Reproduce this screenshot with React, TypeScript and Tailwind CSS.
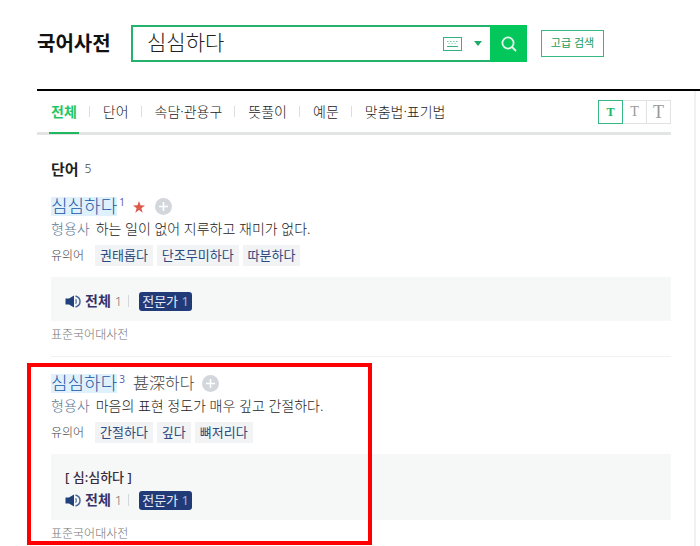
import React, { useState } from "react";

const TABS = ["전체", "단어", "속담·관용구", "뜻풀이", "예문", "맞춤법·표기법"];

interface Entry {
  word: string;
  order: string;
  hanja?: string;
  starred?: boolean;
  part: string;
  meaning: string;
  synonyms: string[];
  pronunciation?: string;
  marked?: boolean;
}

const ENTRIES: Entry[] = [
  {
    word: "심심하다",
    order: "1",
    starred: true,
    part: "형용사",
    meaning: "하는 일이 없어 지루하고 재미가 없다.",
    synonyms: ["권태롭다", "단조무미하다", "따분하다"],
  },
  {
    word: "심심하다",
    order: "3",
    hanja: "甚深하다",
    part: "형용사",
    meaning: "마음의 표현 정도가 매우 깊고 간절하다.",
    synonyms: ["간절하다", "깊다", "뼈저리다"],
    pronunciation: "[ 심:심하다 ]",
    marked: true,
  },
];

function KeyboardIcon() {
  return (
    <svg width="19" height="14" viewBox="0 0 19 14" fill="none" stroke="#35b37c" aria-hidden="true">
      <rect x="0.5" y="0.5" width="18" height="13" />
      <path d="M4 4.5h1.5M7 4.5h1.5M10 4.5h1.5M13 4.5h1.5M5.5 6.5h1M8.5 6.5h1M11.5 6.5h1" strokeOpacity="0.7" />
      <path d="M4 9.5h11" />
    </svg>
  );
}

function SpeakerIcon() {
  return (
    <svg width="16" height="13" viewBox="0 0 16 13" aria-hidden="true">
      <path d="M0.5 3.5H4L9 0.5v12L4 9.5H0.5z" fill="#20407c" />
      <path d="M10.5 4.3q1.8 2.2 0 4.4" fill="none" stroke="#7388ae" strokeWidth="1.4" />
      <path d="M10.5 1q4.500 1.200 4.500 5.500t-4.500 5.500" fill="none" stroke="#4a659a" strokeWidth="1.5" />
    </svg>
  );
}

function StarIcon() {
  return (
    <svg width="12" height="12" viewBox="0 0 12 12" className="mt-0.5" role="img" aria-label="중요 단어">
      <path d="M6 0l1.500 4.300 4.500.1-3.600 2.800 1.300 4.500L6 9.100l-3.700 2.600 1.300-4.500L0 4.400l4.500-.1z" fill="#dc5a4b" />
    </svg>
  );
}

function PlusIcon() {
  return (
    <svg width="17" height="17" viewBox="0 0 17 17" aria-hidden="true">
      <circle cx="8.500" cy="8.500" r="8.500" fill="#d3d7dc" />
      <path d="M8.500 4v9M4 8.500h9" stroke="#fff" strokeWidth="1.600" />
    </svg>
  );
}

function EntryItem({ entry }: { entry: Entry }) {
  return (
    <article className="relative">
      <div className="flex h-6 items-center">
        <h3 className="flex items-center text-lg font-light">
          <a href="#entry" className="flex items-center text-[#2056a4]">
            <span className="bg-[#dff1fd] leading-[19px]">{entry.word}</span>
            <sup className="top-0 ml-0.5 self-start text-[10px] leading-[10px] font-normal text-[#5a5fb8]">{entry.order}</sup>
          </a>
        </h3>
        {entry.hanja && <span className="ml-2 text-base font-light leading-6 text-[#444]">{entry.hanja}</span>}
        <div className="ml-2 flex items-center gap-2.5">
          {entry.starred && <StarIcon />}
          <button type="button" aria-label="단어장에 추가" className="flex">
            <PlusIcon />
          </button>
        </div>
      </div>
      <p className="flex gap-[6px] text-sm leading-[22px] font-light text-[#222]">
        <span className="text-[#5a7893]">{entry.part}</span>
        <span>{entry.meaning}</span>
      </p>
      <div className="mt-[5px] flex items-center text-[13px] leading-[21px]">
        <span className="w-11 text-xs font-light text-[#444]">유의어</span>
        <ul className="flex gap-1">
          {entry.synonyms.map((s) => (
            <li key={s}>
              <a href="#synonym" className="block bg-[#f1f3f4] px-[5px] text-[#2c4a80]">
                {s}
              </a>
            </li>
          ))}
        </ul>
      </div>
      <div className="mt-[11px] bg-[#f6f8f7] px-3.5 pt-[14px] pb-[10px]">
        {entry.pronunciation && (
          <p className="mb-1 text-[13px] leading-[18px] font-medium text-[#3a2a3c]">{entry.pronunciation}</p>
        )}
        <div className="flex h-5 items-center">
          <button type="button" className="flex items-center gap-1 text-sm leading-5 font-bold text-[#35336b]">
            <SpeakerIcon />
            전체 <span className="text-[13px] font-light text-[#777]">1</span>
          </button>
          <span className="mr-2.5 ml-1.5 h-3 w-px bg-[#d5d8da]" />
          <button type="button" className="rounded-[3px] bg-[#213b78] px-[3px] text-[13px] leading-[19px] text-[#e4e9f4]">
            전문가 <span className="text-[#a9b6d2]">1</span>
          </button>
        </div>
      </div>
      <p className="mt-1 text-xs leading-5 font-light text-[#777]">표준국어대사전</p>
      {entry.marked && (
        <div className="pointer-events-none absolute -top-2 -bottom-px -left-6 w-[345px] border-4 border-[#fe0000]" />
      )}
    </article>
  );
}

export default function App() {
  const [query, setQuery] = useState("심심하다");
  const [tab, setTab] = useState(0);
  return (
    <div className="bg-white font-['Noto_Sans','Noto_Sans_CJK_KR',sans-serif]">
      <header className="flex h-[89px] items-center pb-[2px] pl-[37px]">
        <h1 className="w-[94px] text-xl font-bold text-[#111]">국어사전</h1>
        <form className="flex h-[37px] w-[396px] border-2 border-[#25b26c]" onSubmit={(e) => e.preventDefault()}>
          <input
            aria-label="검색어"
            value={query}
            onChange={(e) => setQuery(e.target.value)}
            className="min-w-0 flex-1 pb-0.5 pl-3.5 text-[21px] font-light text-[#222] outline-none"
          />
          <button type="button" aria-label="입력기" className="flex items-center">
            <KeyboardIcon />
          </button>
          <button type="button" aria-label="자동완성 펼치기" className="mr-2 ml-3 flex items-center">
            <svg width="8" height="5" viewBox="0 0 8 5" aria-hidden="true">
              <path d="M0 0h8L4 5z" fill="#20aa68" />
            </svg>
          </button>
          <button type="submit" aria-label="검색" className="-my-0.5 -mr-0.5 flex w-[37px] items-center justify-center bg-[#03c75a]">
            <svg width="16" height="16" viewBox="0 0 16 16" fill="none" stroke="#e3faec" strokeWidth="1.800" aria-hidden="true">
              <circle cx="7" cy="7" r="5.600" />
              <path d="M11 11l4 4" />
            </svg>
          </button>
        </form>
        <button type="button" className="ml-3.5 h-[27px] w-[63px] border border-[#35b882] text-[11px] text-[#159b60]">
          고급 검색
        </button>
      </header>
      <div className="ml-[37px] border-t-2 border-black">
        <div className="mr-1 border-r-2 border-[#f0f1f1] pr-[23px]">
          <nav className="flex h-[44px] items-center justify-between border-b-3 border-[#e3e5e5] pl-3.5">
            <ul className="flex h-[44px] items-center text-sm">
              {TABS.map((t, i) => (
                <li key={t} className="flex items-center">
                  {i > 0 && <span className="mr-[13px] ml-3 h-[11px] w-px bg-[#dcdfdf]" />}
                  <button
                    type="button"
                    onClick={() => setTab(i)}
                    className={
                      i === tab
                        ? "-mx-0.5 h-[44px] border-b-2 border-[#1fb85f] px-0.5 pt-0.5 font-bold text-[#1fc765]"
                        : "h-[44px] border-b-2 border-transparent pt-0.5 font-light text-[#222]"
                    }
                  >
                    {t}
                  </button>
                </li>
              ))}
            </ul>
            <div className="flex h-6 font-['Liberation_Serif',serif] leading-none text-[#999]">
              <button type="button" aria-label="글자 작게" className="w-[25px] border border-[#35b882] text-xs leading-none font-bold text-[#12b865]">T</button>
              <button type="button" aria-label="글자 보통" className="w-6 border border-l-0 border-[#e0e2e2] text-sm leading-none">T</button>
              <button type="button" aria-label="글자 크게" className="w-6 border border-l-0 border-[#e0e2e2] text-lg leading-none">T</button>
            </div>
          </nav>
          <main className="pl-3.5">
            <h2 className="flex items-center gap-1.5 pt-6 text-[15px] leading-5 font-bold text-[#222]">
              단어 <span className="text-xs font-light text-[#444]">5</span>
            </h2>
            <div className="mt-[15px]">
              {ENTRIES.map((e) => (
                <div key={e.order} className="mb-[14px] border-b border-[#f0f1f1] pb-[11px] last:mb-0 last:border-0 last:pb-0.5">
                  <EntryItem entry={e} />
                </div>
              ))}
            </div>
          </main>
        </div>
      </div>
    </div>
  );
}
